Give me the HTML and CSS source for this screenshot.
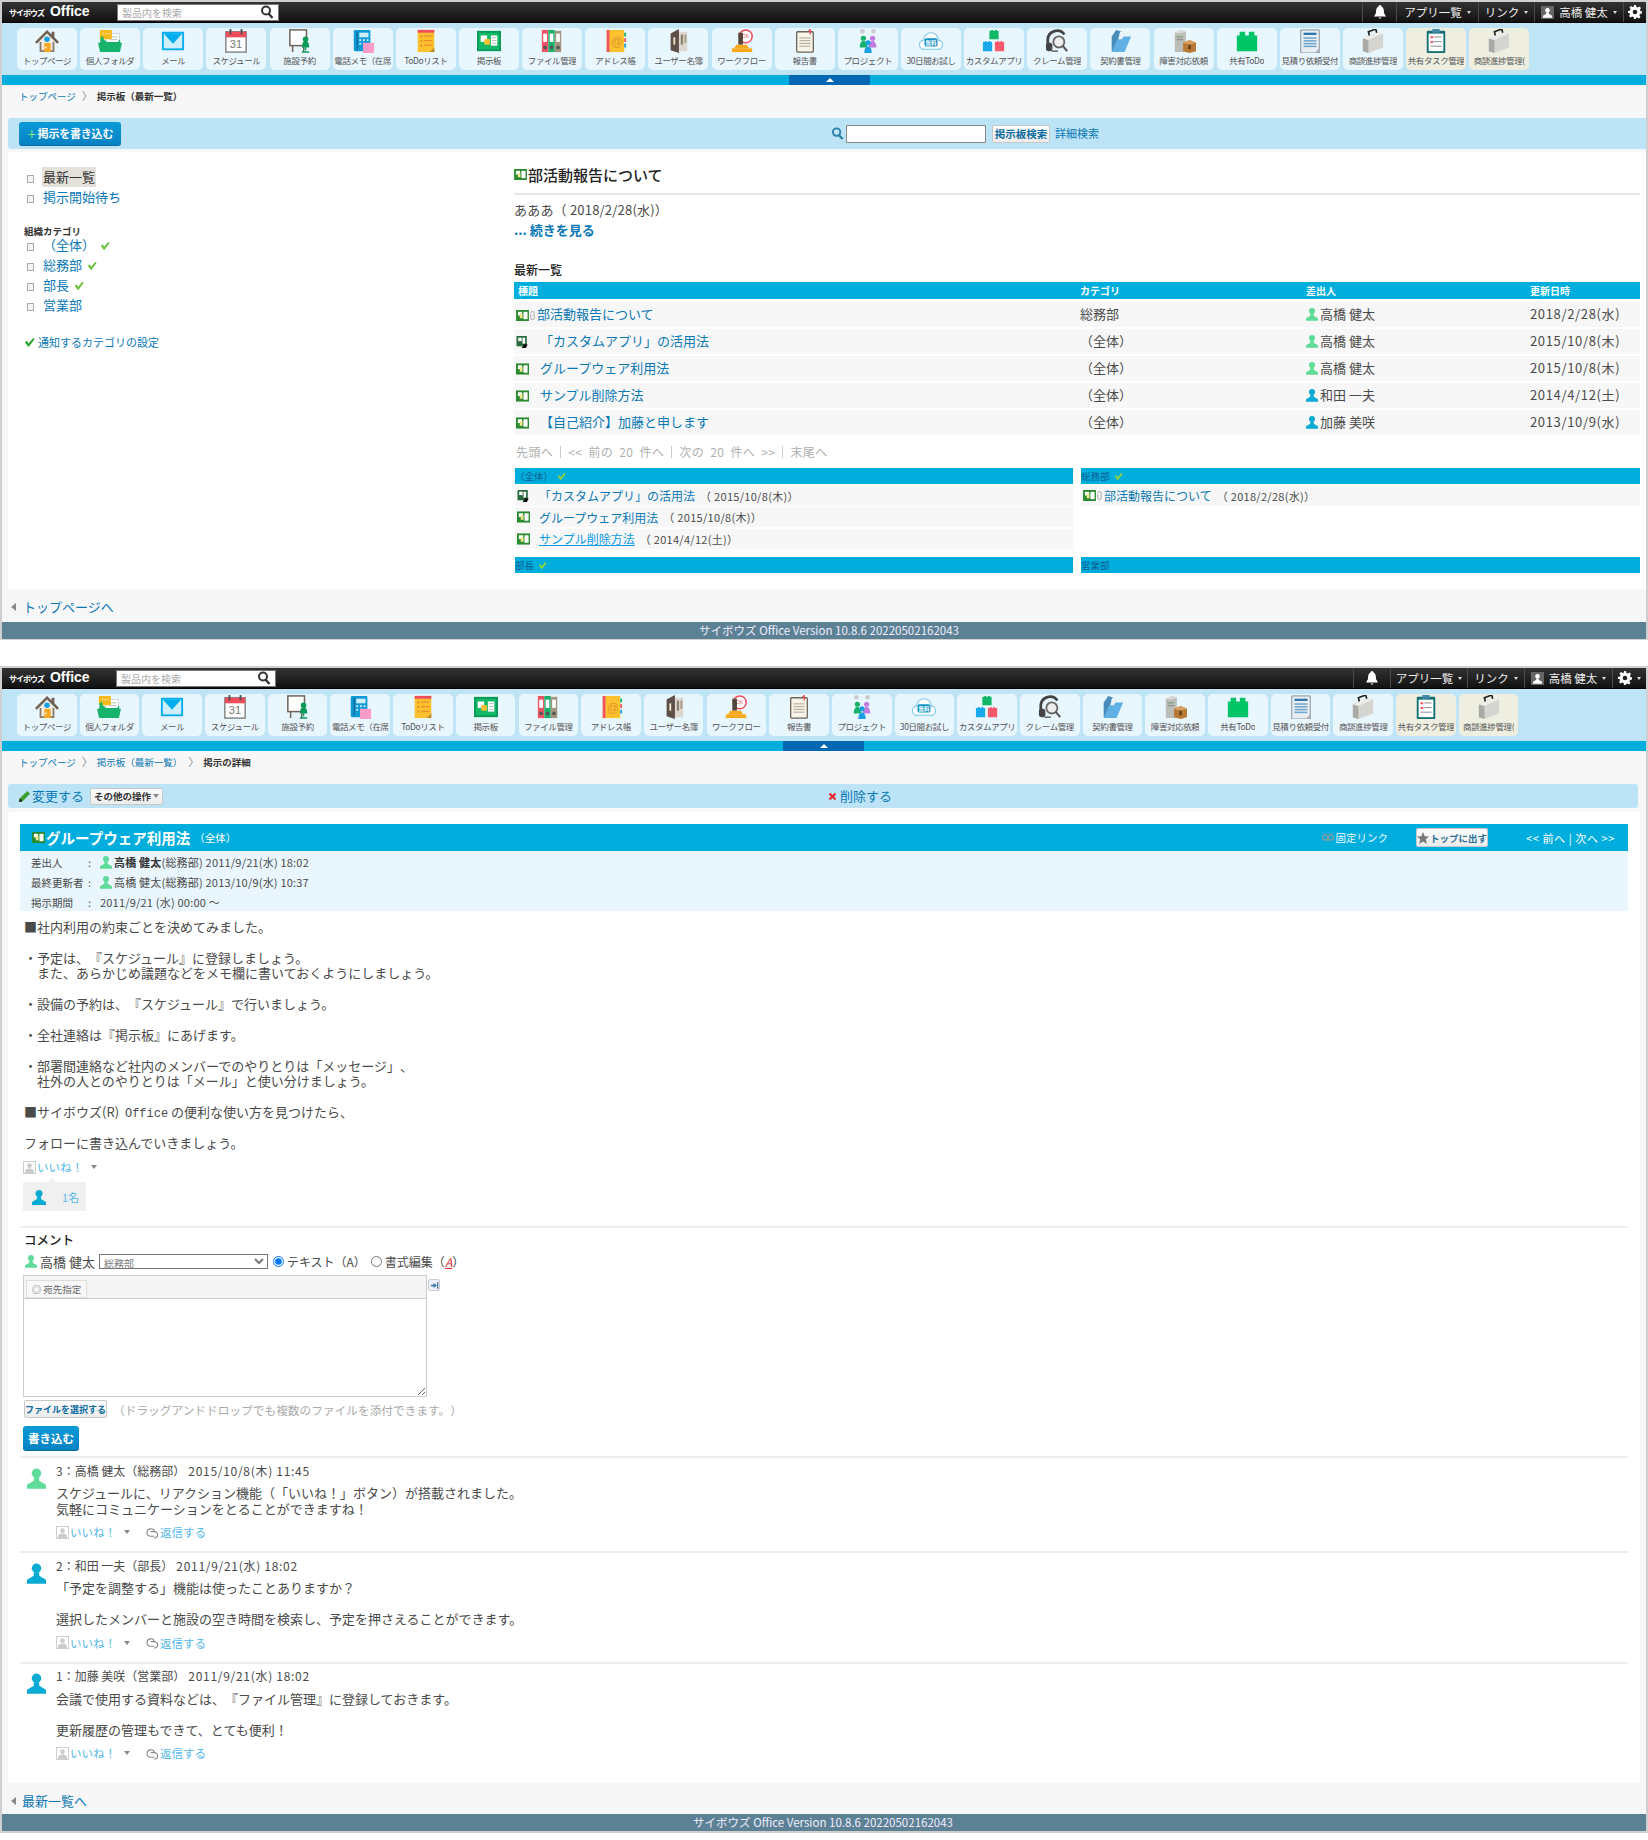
FILE: index.html
```html
<!DOCTYPE html>
<html lang="ja">
<head>
<meta charset="utf-8">
<title>サイボウズ Office 掲示板</title>
<link rel="stylesheet" href="styles.css">
</head>
<body>
<svg class="defs" width="0" height="0" aria-hidden="true">
<defs>
<symbol id="a-home" viewBox="0 0 26 26"><path d="M5 13 13 5l8 8v12H5z" fill="#f3efe6"/><path d="M13 1 0 14l2 2L13 5l11 11 2-2-5-5V3h-3v3z" fill="#6f6154"/><path d="M5 14v11h16V14h-2v9H7v-9z" fill="#8a7c6c"/><circle cx="13" cy="11" r="3" fill="#18a0e0"/><rect x="10" y="15" width="7" height="10" fill="#f7a823"/><rect x="11" y="19" width="1.5" height="2" fill="#fff"/></symbol>
<symbol id="a-folder" viewBox="0 0 26 26"><rect x="9" y="5" width="14" height="10" fill="#fff" stroke="#bbb" stroke-width=".6"/><rect x="13" y="8" width="8" height="1" fill="#9ccb9c"/><rect x="13" y="11" width="8" height="1" fill="#bbb"/><rect x="2" y="1" width="13" height="10" rx="1" fill="#f7b91c"/><circle cx="6" cy="5" r=".8" fill="#fff"/><circle cx="9" cy="5" r=".8" fill="#fff"/><circle cx="12" cy="5" r=".8" fill="#fff"/><path d="M3 8h3v3l4 3h12l1-2h1v6H2z" fill="#18b36b"/><path d="M0 15h26l-2 9a2 2 0 0 1-2 1H4a2 2 0 0 1-2-1z" fill="#18b36b"/></symbol>
<symbol id="a-mail" viewBox="0 0 26 26"><rect x="1" y="3" width="24" height="20" fill="#00aeef"/><rect x="3" y="5" width="20" height="16" fill="#cdeefb"/><path d="M3 5h20L13 16z" fill="#00aeef"/></symbol>
<symbol id="a-sched" viewBox="0 0 26 26"><rect x="2" y="3" width="22" height="22" fill="#fff" stroke="#777" stroke-width="1.4"/><rect x="2" y="3" width="22" height="6" fill="#ef4c5c"/><rect x="6" y="0" width="2" height="6" fill="#555"/><rect x="18" y="0" width="2" height="6" fill="#555"/><text x="13" y="21" font-family="Liberation Sans" font-size="12" text-anchor="middle" fill="#777">31</text></symbol>
<symbol id="a-fac" viewBox="0 0 26 26"><rect x="2" y="1" width="18" height="17" fill="#fff" stroke="#6c6257" stroke-width="1.6"/><path d="M5 18v7M17 18v7" stroke="#6c6257" stroke-width="1.6"/><circle cx="19" cy="11" r="3" fill="#0a9a58"/><path d="M15 20c0-5 2-7 4-7s4 2 4 7z" fill="#0a9a58"/><path d="M19 20v3M15 25h8" stroke="#0a9a58" stroke-width="1.6"/></symbol>
<symbol id="a-phone" viewBox="0 0 26 26"><rect x="3" y="1" width="18" height="23" rx="1.5" fill="#0e9ad6"/><rect x="6" y="3" width="1.6" height="19" fill="#0a6d9c"/><rect x="9" y="4" width="10" height="5" fill="#cdeefb"/><g fill="#cdeefb"><rect x="9" y="11" width="2" height="2"/><rect x="13" y="11" width="2" height="2"/><rect x="17" y="11" width="2" height="2"/><rect x="9" y="15" width="2" height="2"/><rect x="13" y="15" width="2" height="2"/></g><rect x="13" y="15" width="12" height="11" fill="#fb9cc8"/></symbol>
<symbol id="a-todo" viewBox="0 0 26 26"><rect x="4" y="1" width="18" height="24" fill="#fcc12e"/><rect x="4" y="1" width="18" height="3" fill="#ef4c5c"/><g fill="#e8892b"><rect x="7" y="7" width="2" height="2"/><rect x="11" y="7" width="9" height="1.2"/><rect x="7" y="12" width="2" height="2"/><rect x="11" y="12" width="9" height="1.2"/><rect x="7" y="17" width="2" height="2"/><rect x="11" y="17" width="9" height="1.2"/></g><path d="M17 25l5-5v5z" fill="#b98a2a"/></symbol>
<symbol id="a-board" viewBox="0 0 26 26"><rect x="0" y="2" width="26" height="22" fill="#0a9a58"/><rect x="2" y="4" width="22" height="18" fill="#10b868"/><rect x="4" y="7" width="7" height="7" fill="#fff"/><rect x="8" y="11" width="6" height="6" fill="#fcc12e"/><rect x="15" y="7" width="7" height="11" fill="#fff"/><g fill="#aaa"><rect x="16" y="9" width="5" height=".8"/><rect x="16" y="12" width="5" height=".8"/><rect x="16" y="15" width="5" height=".8"/></g></symbol>
<symbol id="a-file" viewBox="0 0 26 26"><rect x="2" y="1" width="7" height="24" fill="#ef5466"/><rect x="9" y="1" width="7" height="24" fill="#18b36b"/><rect x="16" y="2" width="7" height="23" fill="#a2957f"/><g fill="#fff"><rect x="3.5" y="5" width="4" height="9"/><rect x="10.5" y="5" width="4" height="9"/><rect x="17.5" y="5" width="4" height="9"/></g><circle cx="5.5" cy="20" r="2" fill="#555"/><circle cx="12.5" cy="20" r="2" fill="#555"/><circle cx="19.5" cy="20" r="2" fill="#555"/></symbol>
<symbol id="a-addr" viewBox="0 0 26 26"><rect x="4" y="1" width="19" height="24" fill="#fcc12e"/><rect x="4" y="1" width="3" height="24" fill="#ef5466"/><g fill="#18b36b"><rect x="23" y="4" width="2" height="4"/></g><rect x="23" y="10" width="2" height="4" fill="#ef5466"/><rect x="23" y="16" width="2" height="4" fill="#18a0e0"/><text x="15" y="18" font-family="Liberation Sans" font-size="13" text-anchor="middle" fill="#e2962c">@</text></symbol>
<symbol id="a-user" viewBox="0 0 26 26"><path d="M13 3h10v21H13z" fill="#dcd8cf"/><path d="M5 5l9-5v26l-9-3z" fill="#5e5048"/><rect x="8" y="9" width="2" height="8" fill="#efe7c9"/><rect x="16" y="6" width="2.500" height="11" fill="#8c8270"/><rect x="20" y="6" width="2" height="9" fill="#a69a86"/></symbol>
<symbol id="a-wf" viewBox="0 0 26 26"><circle cx="17" cy="8" r="7" fill="#fff" stroke="#ef4c5c" stroke-width="1.6"/><text x="17" y="10" font-family="Liberation Sans" font-size="5" text-anchor="middle" fill="#ef4c5c">OK</text><rect x="9" y="4" width="5" height="13" fill="#55463c"/><path d="M7 17h11l3 4H4z" fill="#f9a81b"/><rect x="2" y="21" width="22" height="4" fill="#f9a81b"/></symbol>
<symbol id="a-rep" viewBox="0 0 26 26"><rect x="4" y="3" width="18" height="22" rx="1" fill="#f7f4e9" stroke="#6c6257" stroke-width="1.4"/><g fill="#b7ae98"><rect x="7" y="9" width="12" height="1.2"/><rect x="7" y="12" width="12" height="1.2"/><rect x="7" y="15" width="12" height="1.2"/><rect x="7" y="18" width="12" height="1.2"/></g><path d="M18 0h1.4v6H18z" fill="#ef4c5c"/><path d="M16 2l3-2v3z" fill="#ef4c5c"/></symbol>
<symbol id="a-proj" viewBox="0 0 26 26"><circle cx="7" cy="2.5" r="2.5" fill="#ccc"/><circle cx="19" cy="2.5" r="2.5" fill="#ccc"/><circle cx="8" cy="10" r="2.8" fill="#18b36b"/><path d="M4 20c0-5 2-7 4-7s4 2 4 7z" fill="#18b36b"/><circle cx="18" cy="10" r="2.8" fill="#c27be0"/><path d="M14 20c0-5 2-7 4-7s4 2 4 7z" fill="#c27be0"/><circle cx="13" cy="15" r="2.8" fill="#18a0e0"/><path d="M9 26c0-5 2-7 4-7s4 2 4 7z" fill="#18a0e0"/></symbol>
<symbol id="a-trial" viewBox="0 0 26 26"><path d="M6 22a5 5 0 0 1-1-10 8 8 0 0 1 16 0 5 5 0 0 1-1 10z" fill="#fff" stroke="#7fc8e8" stroke-width="1.2"/><rect x="6" y="10" width="14" height="9" rx="2" fill="#0e8fc4"/><text x="13" y="17" font-family="Noto Sans CJK JP" font-weight="700" font-size="6" text-anchor="middle" fill="#fff">無料</text></symbol>
<symbol id="a-custom" viewBox="0 0 26 26"><path d="M8 2h2v-1h2v1h2v-1h2v1h2v9H8z" fill="#10b868"/><path d="M1 14h2v-1h2v1h2v-1h2v1h2v10H1z" fill="#18a8ec"/><path d="M14 14h2v-1h2v1h2v-1h2v1h2v10H14z" fill="#f9596b"/></symbol>
<symbol id="a-claim" viewBox="0 0 26 26"><path d="M3 18V11a10 10 0 0 1 18-5" fill="none" stroke="#444" stroke-width="3"/><rect x="1" y="15" width="7" height="9" rx="3" fill="#444"/><circle cx="15" cy="14" r="6" fill="#eee" stroke="#666" stroke-width="2"/><path d="M19 18l5 6" stroke="#555" stroke-width="2.4"/><path d="M7 24h7" stroke="#444" stroke-width="1.4"/></symbol>
<symbol id="a-contract" viewBox="0 0 26 26"><path d="M4 24V8l5-7 6 2v19z" fill="#4a8cba"/><path d="M9 20l4-17 7 1-4 16z" fill="#e8f2f8"/><path d="M4 25l6-14h5l2-3h8l-7 17z" fill="#5fb0e4"/></symbol>
<symbol id="a-inc" viewBox="0 0 26 26"><path d="M3 4l7-3 5 2v22H3z" fill="#bdbdb8"/><path d="M3 4l7-3 5 2-7 2z" fill="#dcdcd8"/><rect x="5" y="8" width="7" height="1.2" fill="#7aa07a"/><rect x="5" y="11" width="7" height="1.2" fill="#888"/><path d="M12 15l7-3 7 3v9l-7 2-7-2z" fill="#b87a34"/><path d="M12 15l7 2 7-2-7-3z" fill="#d8a060"/><rect x="17.5" y="17" width="3" height="5" fill="#6b4218"/></symbol>
<symbol id="a-block" viewBox="0 0 26 26"><path d="M2 7h3V3h6v4h4V3h6v4h3v17H2z" fill="#00c468"/></symbol>
<symbol id="a-est" viewBox="0 0 26 26"><path d="M3 1h20v25H3z" fill="#e8eef2" stroke="#7f8c96" stroke-width="1"/><rect x="6" y="4" width="14" height="2.5" fill="#2f78ad"/><g fill="#6aa3cc"><rect x="6" y="9" width="14" height="1.6"/><rect x="6" y="12" width="14" height="1.6"/><rect x="6" y="15" width="14" height="1.6"/><rect x="6" y="18" width="14" height="1.6"/></g><path d="M18 26l5-5v5z" fill="#aab"/></symbol>
<symbol id="a-case" viewBox="0 0 26 26"><path d="M2 10l16-7 6 2v15L8 26l-6-2z" fill="#d4d4d0"/><path d="M2 10l6 2v14l-6-2z" fill="#a9a9a5"/><path d="M2 10l16-7 6 2-16 7z" fill="#ecece8"/><path d="M9 7l-1-4 8-3 1 4" fill="none" stroke="#222" stroke-width="1.8"/></symbol>
<symbol id="a-clip" viewBox="0 0 26 26"><rect x="3" y="2" width="20" height="24" rx="1" fill="#136f72"/><rect x="5" y="5" width="16" height="19" fill="#fff"/><rect x="9" y="0" width="8" height="4" fill="#4488aa"/><g fill="#ef4c5c"><rect x="7" y="8" width="3" height="2"/><rect x="7" y="13" width="3" height="2"/></g><g fill="#999"><rect x="11" y="8" width="8" height="1.2"/><rect x="11" y="13" width="8" height="1.2"/><rect x="7" y="18" width="12" height="1.2"/></g></symbol>

<symbol id="s-board" viewBox="0 0 14 12"><rect width="14" height="12" fill="#2a8a2f"/><rect x="2" y="2" width="4.5" height="4" fill="#fff"/><rect x="4" y="4" width="3" height="5" fill="#f3e78f"/><rect x="8" y="2" width="4.5" height="8" fill="#fff"/></symbol>
<symbol id="s-draft" viewBox="0 0 14 14"><rect width="12" height="12" fill="#2a6a3f"/><rect x="2" y="2" width="4" height="4" fill="#fff"/><rect x="7" y="2" width="3" height="7" fill="#fff"/><path d="M6 14l3-5 4 1-2 4z" fill="#111"/></symbol>
<symbol id="s-user" viewBox="0 0 14 16"><circle cx="7" cy="4.5" r="3.5" fill="currentColor"/><path d="M5 7.5h4V10l5 3v3H0v-3l5-3z" fill="currentColor"/></symbol>
<symbol id="s-check" viewBox="0 0 12 12"><path d="M1 6l2-2 2 3 5-6 1.5 1.5L5 11z" fill="currentColor"/></symbol>
<symbol id="s-mag" viewBox="0 0 14 14"><circle cx="6" cy="5.5" r="4" fill="none" stroke="currentColor" stroke-width="2"/><path d="M8.5 8.5l4 4.5" stroke="currentColor" stroke-width="2.4"/></symbol>
<symbol id="s-paper" viewBox="0 0 6 12"><path d="M1 3a2 2 0 0 1 4 0v6a2 2 0 0 1-4 0V4" fill="none" stroke="#999" stroke-width="1"/></symbol>
<symbol id="s-like" viewBox="0 0 14 14"><rect x=".5" y=".5" width="13" height="13" fill="#fff" stroke="#ccc"/><circle cx="7" cy="5" r="2.5" fill="#ccc"/><path d="M2 13c0-4 2-5 5-5s5 1 5 5z" fill="#ccc"/></symbol>
<symbol id="s-reply" viewBox="0 0 14 14"><path d="M9 11H5a4 4 0 1 1 4-5" fill="none" stroke="#888" stroke-width="1.2"/><path d="M5 6h4a3.500 3.500 0 0 1 0 7" fill="none" stroke="#888" stroke-width="1.2"/></symbol>
<symbol id="s-bell" viewBox="0 0 12 14"><path d="M6 0c1 0 1.500 1 1.500 1.500C10 2.500 10 6 10 8l2 3.500H0L2 8c0-2 0-5.500 2.500-6.500C4.500 1 5 0 6 0z" fill="#fff"/><path d="M4.500 12.500h3l-1.500 1.500z" fill="#fff"/></symbol>
<symbol id="s-gear" viewBox="0 0 14 14"><path d="M6 0h2l.4 2 1.400.6L11.500 1.500 13 3l-1.100 1.700.6 1.400L14 6.500v2l-2 .4-.6 1.400 1.100 1.700-1.500 1.500-1.700-1.100-1.400.6L8 14H6l-.4-2-1.400-.6L2.500 12.500 1 11l1.100-1.700-.6-1.400L0 8V6l2-.4.6-1.400L1.500 2.500 3 1l1.700 1.100L6 1.600z" fill="#fff"/><circle cx="7" cy="7" r="2.300" fill="#222"/></symbol>
<symbol id="s-star" viewBox="0 0 14 14"><path d="M7 0l2 5 5 .3-3.800 3.300L11.500 14 7 11l-4.500 3 1.300-5.400L0 5.300 5 5z" fill="#777"/></symbol>
<symbol id="s-pencil" viewBox="0 0 14 14"><path d="M1 13l1-4L10 1l3 3-8 8z" fill="#3c9e2e"/><path d="M1 13l1-4 3 3z" fill="#222"/></symbol>
<symbol id="s-cross" viewBox="0 0 12 12"><path d="M1 3l2-2 3 3 3-3 2 2-3 3 3 3-2 2-3-3-3 3-2-2 3-3z" fill="#e6282c"/></symbol>
<symbol id="s-link" viewBox="0 0 14 8"><rect x=".5" y="1" width="7" height="6" rx="3" fill="none" stroke="#999" stroke-width="1.4"/><rect x="6.500" y="1" width="7" height="6" rx="3" fill="none" stroke="#999" stroke-width="1.4"/></symbol>
<symbol id="s-expand" viewBox="0 0 10 10"><path d="M1 5h5M4 3l2.500 2L4 7" fill="none" stroke="#3a78a8" stroke-width="1.400"/><path d="M8.500 1.500v7" stroke="#3a78a8" stroke-width="1.400"/></symbol>
</defs>
</svg>

<!-- First window: bulletin board list -->
<section class="win win-a">
  <header class="topbar">
    <div class="logo"><span class="logo-small">サイボウズ</span> <span class="logo-big">Office</span></div>
    <div class="search"><span class="search-ph">製品内を検索</span><svg class="ic-mag"><use href="#s-mag"/></svg></div>
    <div class="top-right">
      <div class="t-cell t-bell"><svg class="ic-bell"><use href="#s-bell"/></svg></div>
      <div class="t-cell t-apps">アプリ一覧<i class="caret"></i></div>
      <div class="t-cell t-links">リンク<i class="caret"></i></div>
      <div class="t-cell t-me"><span class="me-box"><svg class="ic-me"><use href="#s-user"/></svg></span>高橋 健太<i class="caret"></i></div>
      <div class="t-cell t-gear"><svg class="ic-gear"><use href="#s-gear"/></svg></div>
    </div>
  </header>
  <nav class="apps">
    <a class="tile"><svg><use href="#a-home"/></svg><span>トップページ</span></a>
    <a class="tile"><svg><use href="#a-folder"/></svg><span>個人フォルダ</span></a>
    <a class="tile"><svg><use href="#a-mail"/></svg><span>メール</span></a>
    <a class="tile"><svg><use href="#a-sched"/></svg><span>スケジュール</span></a>
    <a class="tile"><svg><use href="#a-fac"/></svg><span>施設予約</span></a>
    <a class="tile"><svg><use href="#a-phone"/></svg><span>電話メモ（在席</span></a>
    <a class="tile"><svg><use href="#a-todo"/></svg><span>ToDoリスト</span></a>
    <a class="tile"><svg><use href="#a-board"/></svg><span>掲示板</span></a>
    <a class="tile"><svg><use href="#a-file"/></svg><span>ファイル管理</span></a>
    <a class="tile"><svg><use href="#a-addr"/></svg><span>アドレス帳</span></a>
    <a class="tile"><svg><use href="#a-user"/></svg><span>ユーザー名簿</span></a>
    <a class="tile"><svg><use href="#a-wf"/></svg><span>ワークフロー</span></a>
    <a class="tile"><svg><use href="#a-rep"/></svg><span>報告書</span></a>
    <a class="tile"><svg><use href="#a-proj"/></svg><span>プロジェクト</span></a>
    <a class="tile"><svg><use href="#a-trial"/></svg><span>30日間お試し</span></a>
    <a class="tile"><svg><use href="#a-custom"/></svg><span>カスタムアプリ</span></a>
    <a class="tile"><svg><use href="#a-claim"/></svg><span>クレーム管理</span></a>
    <a class="tile"><svg><use href="#a-contract"/></svg><span>契約書管理</span></a>
    <a class="tile"><svg><use href="#a-inc"/></svg><span>障害対応依頼</span></a>
    <a class="tile"><svg><use href="#a-block"/></svg><span>共有ToDo</span></a>
    <a class="tile"><svg><use href="#a-est"/></svg><span>見積り依頼受付</span></a>
    <a class="tile"><svg><use href="#a-case"/></svg><span>商談進捗管理</span></a>
    <a class="tile tile-beige"><svg><use href="#a-clip"/></svg><span>共有タスク管理</span></a>
    <a class="tile tile-beige"><svg><use href="#a-case"/></svg><span>商談進捗管理(</span></a>
  </nav>
  <div class="collapse"><div class="collapse-tab"><i class="up"></i></div></div>
  <div class="crumbs"><a class="link">トップページ</a><span class="sep">〉</span><b>掲示板（最新一覧）</b></div>
  <div class="toolbar toolbar-a">
    <button class="btn-primary btn-post"><span class="plus">＋</span>掲示を書き込む</button>
    <div class="tb-search">
      <svg class="ic-tbmag"><use href="#s-mag"/></svg>
      <input class="tb-input" type="text" aria-label="検索">
      <button class="btn-light btn-find">掲示板検索</button>
      <a class="link tb-adv">詳細検索</a>
    </div>
  </div>
  <main class="sheet sheet-list">
    <aside class="side">
      <ul class="side-list">
        <li><i class="dot"></i><span class="current">最新一覧</span></li>
        <li><i class="dot"></i><a class="link">掲示開始待ち</a></li>
      </ul>
      <h4 class="side-head">組織カテゴリ</h4>
      <ul class="side-list">
        <li><i class="dot"></i><a class="link">（全体）</a><svg class="ic-check"><use href="#s-check"/></svg></li>
        <li><i class="dot"></i><a class="link">総務部</a><svg class="ic-check"><use href="#s-check"/></svg></li>
        <li><i class="dot"></i><a class="link">部長</a><svg class="ic-check"><use href="#s-check"/></svg></li>
        <li><i class="dot"></i><a class="link">営業部</a></li>
      </ul>
      <div class="side-notify"><svg class="ic-check2"><use href="#s-check"/></svg><a class="link">通知するカテゴリの設定</a></div>
    </aside>
    <div class="main-col">
      <h2 class="top-title"><svg class="ic-board"><use href="#s-board"/></svg>部活動報告について</h2>
      <p class="excerpt">あああ（ 2018/2/28(水)）</p>
      <a class="link more">... 続きを見る</a>
      <h3 class="list-head">最新一覧</h3>
      <table class="list">
        <thead><tr><th class="c1">標題</th><th class="c2">カテゴリ</th><th class="c3">差出人</th><th class="c4">更新日時</th></tr></thead>
        <tbody>
          <tr><td><svg class="ic-board"><use href="#s-board"/></svg><svg class="ic-paper"><use href="#s-paper"/></svg><a class="link">部活動報告について</a></td><td>総務部</td><td><svg class="ic-u u-green"><use href="#s-user"/></svg>高橋 健太</td><td class="date">2018/2/28(水)</td></tr>
          <tr><td><svg class="ic-board ic-row"><use href="#s-draft"/></svg><a class="link">「カスタムアプリ」の活用法</a></td><td>（全体）</td><td><svg class="ic-u u-green"><use href="#s-user"/></svg>高橋 健太</td><td class="date">2015/10/8(木)</td></tr>
          <tr><td><svg class="ic-board ic-row"><use href="#s-board"/></svg><a class="link">グループウェア利用法</a></td><td>（全体）</td><td><svg class="ic-u u-green"><use href="#s-user"/></svg>高橋 健太</td><td class="date">2015/10/8(木)</td></tr>
          <tr><td><svg class="ic-board ic-row"><use href="#s-board"/></svg><a class="link">サンプル削除方法</a></td><td>（全体）</td><td><svg class="ic-u u-blue"><use href="#s-user"/></svg>和田 一夫</td><td class="date">2014/4/12(土)</td></tr>
          <tr><td><svg class="ic-board ic-row"><use href="#s-board"/></svg><a class="link">【自己紹介】加藤と申します</a></td><td>（全体）</td><td><svg class="ic-u u-blue"><use href="#s-user"/></svg>加藤 美咲</td><td class="date">2013/10/9(水)</td></tr>
        </tbody>
      </table>
      <p class="pager">先頭へ<i></i>&lt;&lt; 前の 20 件へ<i></i>次の 20 件へ &gt;&gt;<i></i>末尾へ</p>
      <div class="panels">
        <section class="panel">
          <h5 class="panel-head">（全体）<svg class="ic-pcheck"><use href="#s-check"/></svg></h5>
          <div class="panel-row"><svg class="ic-board ic-row"><use href="#s-draft"/></svg><a class="link">「カスタムアプリ」の活用法</a><span class="p-date">（ 2015/10/8(木)）</span></div>
          <div class="panel-row"><svg class="ic-board ic-row"><use href="#s-board"/></svg><a class="link">グループウェア利用法</a><span class="p-date">（ 2015/10/8(木)）</span></div>
          <div class="panel-row"><svg class="ic-board ic-row"><use href="#s-board"/></svg><a class="link hover">サンプル削除方法</a><span class="p-date">（ 2014/4/12(土)）</span></div>
        </section>
        <section class="panel">
          <h5 class="panel-head">総務部<svg class="ic-pcheck"><use href="#s-check"/></svg></h5>
          <div class="panel-row"><svg class="ic-board"><use href="#s-board"/></svg><svg class="ic-paper"><use href="#s-paper"/></svg><a class="link">部活動報告について</a><span class="p-date">（ 2018/2/28(水)）</span></div>
        </section>
        <section class="panel"><h5 class="panel-head">部長<svg class="ic-pcheck"><use href="#s-check"/></svg></h5></section>
        <section class="panel"><h5 class="panel-head">営業部</h5></section>
      </div>
    </div>
  </main>
  <div class="back"><i class="left"></i><a class="link">トップページへ</a></div>
  <footer class="foot foot-a">サイボウズ Office Version 10.8.6 20220502162043</footer>
</section>

<!-- Second window: post detail -->
<section class="win win-b">
  <header class="topbar">
    <div class="logo"><span class="logo-small">サイボウズ</span> <span class="logo-big">Office</span></div>
    <div class="search"><span class="search-ph">製品内を検索</span><svg class="ic-mag"><use href="#s-mag"/></svg></div>
    <div class="top-right">
      <div class="t-cell t-bell"><svg class="ic-bell"><use href="#s-bell"/></svg></div>
      <div class="t-cell t-apps">アプリ一覧<i class="caret"></i></div>
      <div class="t-cell t-links">リンク<i class="caret"></i></div>
      <div class="t-cell t-me"><span class="me-box"><svg class="ic-me"><use href="#s-user"/></svg></span>高橋 健太<i class="caret"></i></div>
      <div class="t-cell t-gear"><svg class="ic-gear"><use href="#s-gear"/></svg><i class="caret"></i></div>
    </div>
  </header>
  <nav class="apps">
    <a class="tile"><svg><use href="#a-home"/></svg><span>トップページ</span></a>
    <a class="tile"><svg><use href="#a-folder"/></svg><span>個人フォルダ</span></a>
    <a class="tile"><svg><use href="#a-mail"/></svg><span>メール</span></a>
    <a class="tile"><svg><use href="#a-sched"/></svg><span>スケジュール</span></a>
    <a class="tile"><svg><use href="#a-fac"/></svg><span>施設予約</span></a>
    <a class="tile"><svg><use href="#a-phone"/></svg><span>電話メモ（在席</span></a>
    <a class="tile"><svg><use href="#a-todo"/></svg><span>ToDoリスト</span></a>
    <a class="tile"><svg><use href="#a-board"/></svg><span>掲示板</span></a>
    <a class="tile"><svg><use href="#a-file"/></svg><span>ファイル管理</span></a>
    <a class="tile"><svg><use href="#a-addr"/></svg><span>アドレス帳</span></a>
    <a class="tile"><svg><use href="#a-user"/></svg><span>ユーザー名簿</span></a>
    <a class="tile"><svg><use href="#a-wf"/></svg><span>ワークフロー</span></a>
    <a class="tile"><svg><use href="#a-rep"/></svg><span>報告書</span></a>
    <a class="tile"><svg><use href="#a-proj"/></svg><span>プロジェクト</span></a>
    <a class="tile"><svg><use href="#a-trial"/></svg><span>30日間お試し</span></a>
    <a class="tile"><svg><use href="#a-custom"/></svg><span>カスタムアプリ</span></a>
    <a class="tile"><svg><use href="#a-claim"/></svg><span>クレーム管理</span></a>
    <a class="tile"><svg><use href="#a-contract"/></svg><span>契約書管理</span></a>
    <a class="tile"><svg><use href="#a-inc"/></svg><span>障害対応依頼</span></a>
    <a class="tile"><svg><use href="#a-block"/></svg><span>共有ToDo</span></a>
    <a class="tile"><svg><use href="#a-est"/></svg><span>見積り依頼受付</span></a>
    <a class="tile"><svg><use href="#a-case"/></svg><span>商談進捗管理</span></a>
    <a class="tile tile-beige"><svg><use href="#a-clip"/></svg><span>共有タスク管理</span></a>
    <a class="tile tile-beige"><svg><use href="#a-case"/></svg><span>商談進捗管理(</span></a>
  </nav>
  <div class="collapse"><div class="collapse-tab"><i class="up"></i></div></div>
  <div class="crumbs"><a class="link">トップページ</a><span class="sep">〉</span><a class="link">掲示板（最新一覧）</a><span class="sep">〉</span><b>掲示の詳細</b></div>
  <div class="toolbar toolbar-b">
    <svg class="ic-pencil"><use href="#s-pencil"/></svg><a class="link tb-edit">変更する</a>
    <button class="btn-light btn-more">その他の操作<i class="caret-dn"></i></button>
    <svg class="ic-cross"><use href="#s-cross"/></svg><a class="link tb-del">削除する</a>
  </div>
  <main class="sheet sheet-detail">
    <div class="title-bar">
      <svg class="ic-board ic-title"><use href="#s-board"/></svg>
      <h1 class="post-title">グループウェア利用法</h1><span class="post-cat">（全体）</span>
      <div class="title-tools">
        <svg class="ic-link"><use href="#s-link"/></svg><a class="fixed-link">固定リンク</a>
        <button class="btn-light btn-top"><svg class="ic-star"><use href="#s-star"/></svg>トップに出す</button>
        <span class="prevnext">&lt;&lt; 前へ | 次へ &gt;&gt;</span>
      </div>
    </div>
    <dl class="info">
      <div class="info-row"><dt>差出人</dt><dd>:</dd><dd class="info-val"><svg class="ic-u u-green"><use href="#s-user"/></svg><b>高橋 健太</b>(総務部) 2011/9/21(水) 18:02</dd></div>
      <div class="info-row"><dt>最終更新者</dt><dd>:</dd><dd class="info-val"><svg class="ic-u u-green"><use href="#s-user"/></svg>高橋 健太(総務部) 2013/10/9(水) 10:37</dd></div>
      <div class="info-row"><dt>掲示期間</dt><dd>:</dd><dd class="info-val">2011/9/21 (水) 00:00 ～</dd></div>
    </dl>
    <div class="post-body">■社内利用の約束ごとを決めてみました。

・予定は、『スケジュール』に登録しましょう。
　また、あらかじめ議題などをメモ欄に書いておくようにしましょう。

・設備の予約は、『スケジュール』で行いましょう。

・全社連絡は『掲示板』にあげます。

・部署間連絡など社内のメンバーでのやりとりは「メッセージ」、
　社外の人とのやりとりは「メール」と使い分けましょう。

■サイボウズ(R) <span class="mono">Office</span> の便利な使い方を見つけたら、

フォローに書き込んでいきましょう。</div>
    <div class="like-row like-main"><svg class="ic-like"><use href="#s-like"/></svg><a class="like-link">いいね！</a><i class="caret-dn caret-like"></i></div>
    <div class="like-box"><svg class="ic-lk u-blue"><use href="#s-user"/></svg><span>1名</span></div>
    <form class="compose">
      <h3 class="compose-head">コメント</h3>
      <div class="compose-row">
        <svg class="ic-u u-green"><use href="#s-user"/></svg><span class="compose-name">高橋 健太</span>
        <select class="dept" aria-label="部署"><option>総務部</option></select>
        <label class="rad rad-first"><input type="radio" name="fmt" checked>テキスト（A）</label>
        <label class="rad"><input type="radio" name="fmt">書式編集（<em>A</em>）</label>
      </div>
      <div class="editor-wrap">
        <div class="editor">
          <div class="ed-tools"><button type="button" class="ed-btn">◎ 宛先指定</button></div>
          <textarea class="ed-text" aria-label="コメント"></textarea>
        </div>
        <span class="ed-expand"><svg class="ic-expand"><use href="#s-expand"/></svg></span>
      </div>
      <div class="file-row"><button type="button" class="btn-light btn-file">ファイルを選択する</button><span class="file-hint">（ドラッグアンドドロップでも複数のファイルを添付できます。）</span></div>
      <button type="button" class="btn-primary btn-write">書き込む</button>
    </form>
    <article class="comment">
      <svg class="avatar u-green"><use href="#s-user"/></svg>
      <div class="c-main">
        <div class="c-head">3：高橋 健太（総務部）<span class="c-date">2015/10/8(木) 11:45</span></div>
        <div class="c-body">スケジュールに、リアクション機能（「いいね！」ボタン）が搭載されました。
気軽にコミュニケーションをとることができますね！</div>
        <div class="like-row"><svg class="ic-like"><use href="#s-like"/></svg><a class="like-link">いいね！</a><i class="caret-dn caret-like"></i><svg class="ic-reply"><use href="#s-reply"/></svg><a class="like-link">返信する</a></div>
      </div>
    </article>
    <article class="comment">
      <svg class="avatar u-blue"><use href="#s-user"/></svg>
      <div class="c-main">
        <div class="c-head">2：和田 一夫（部長）<span class="c-date">2011/9/21(水) 18:02</span></div>
        <div class="c-body">「予定を調整する」機能は使ったことありますか？

選択したメンバーと施設の空き時間を検索し、予定を押さえることができます。</div>
        <div class="like-row"><svg class="ic-like"><use href="#s-like"/></svg><a class="like-link">いいね！</a><i class="caret-dn caret-like"></i><svg class="ic-reply"><use href="#s-reply"/></svg><a class="like-link">返信する</a></div>
      </div>
    </article>
    <article class="comment comment-last">
      <svg class="avatar u-blue"><use href="#s-user"/></svg>
      <div class="c-main">
        <div class="c-head">1：加藤 美咲（営業部）<span class="c-date">2011/9/21(水) 18:02</span></div>
        <div class="c-body">会議で使用する資料などは、『ファイル管理』に登録しておきます。

更新履歴の管理もできて、とても便利！</div>
        <div class="like-row"><svg class="ic-like"><use href="#s-like"/></svg><a class="like-link">いいね！</a><i class="caret-dn caret-like"></i><svg class="ic-reply"><use href="#s-reply"/></svg><a class="like-link">返信する</a></div>
      </div>
    </article>
  </main>
  <div class="back"><i class="left"></i><a class="link">最新一覧へ</a></div>
  <footer class="foot foot-b">サイボウズ Office Version 10.8.6 20220502162043</footer>
</section>
</body>
</html>
```

FILE: styles.css
```css
* { box-sizing: border-box; }
html, body { margin: 0; padding: 0; background: #fff; }
body { font-family: "Noto Sans CJK JP", "Liberation Sans", sans-serif; font-size: 13px; color: #4a4a4a; width: 1648px; height: 1840px; overflow: hidden; text-spacing-trim: space-all; }
h1, h2, h3, h4, h5, p, ul, dl, dd { margin: 0; padding: 0; }
ul { list-style: none; }
i { font-style: normal; }
svg { flex: none; }
.defs { position: absolute; }
.link { color: #0a78b4; }

/* window frames */
.win { background: #f7f7f7; border: solid #cfcfcf; border-width: 2px 2px 1px 2px; }
.win-a { height: 640px; margin-bottom: 26px; }
.win-b { height: 1167px; border-bottom-width: 2px; }

/* top bar */
.topbar { height: 21px; display: flex; align-items: center; background: linear-gradient(#333, #111); border-bottom: 1px solid #000; color: #fff; }
.logo { width: 115px; padding-left: 7px; white-space: nowrap; line-height: 20px; font-weight: 700; }
.win-b .logo { width: 114px; }
.logo-small { font-size: 8px; letter-spacing: -1px; margin-right: 3px; }
.logo-big { font-size: 14px; font-family: "Liberation Sans", sans-serif; }
.search { width: 162px; height: 17px; background: #fff; display: flex; align-items: center; justify-content: space-between; padding: 0 4px; border: 1px solid #777; }
.win-b .search { width: 160px; }
.search-ph { font-size: 10px; color: #aaa; }
.ic-mag { width: 14px; height: 14px; color: #333; }
.top-right { margin-left: auto; display: flex; height: 100%; }
.t-cell { display: flex; align-items: center; justify-content: center; height: 100%; border-left: 1px solid #4a4a4a; font-size: 11.5px; color: #eee; white-space: nowrap; }
.win-a .t-bell { width: 34px; } .win-a .t-apps { width: 82px; } .win-a .t-links { width: 56px; } .win-a .t-me { width: 89px; } .win-a .t-gear { width: 23px; }
.win-b .t-bell { width: 37px; } .win-b .t-apps { width: 77px; } .win-b .t-links { width: 57px; } .win-b .t-me { width: 88px; } .win-b .t-gear { width: 34px; }
.caret { display: inline-block; margin-left: 5px; border: 2.5px solid transparent; border-top: 3px solid #ddd; border-bottom: 0; }
.ic-bell { width: 12px; height: 14px; }
.ic-gear { width: 14px; height: 14px; }
.me-box { width: 13px; height: 13px; background: #666; display: inline-flex; align-items: center; justify-content: center; margin-right: 5px; }
.ic-me { width: 9px; height: 11px; color: #fff; }

/* app launcher */
.apps { height: 52px; background: #bee4f5; display: flex; padding: 5px 0 0 15px; gap: 3.15px; }
.win-b .apps { gap: 3.1px; }
.tile { width: 60px; height: 42px; background: #e8f6fd; border-radius: 5px; padding-top: 1px; display: flex; flex-direction: column; align-items: center; overflow: hidden; }
.win-b .tile { width: 59.6px; }
.tile-beige { background: #efefe1; }
.tile svg { width: 26px; height: 24px; }
.tile span { display: block; max-width: 100%; line-height: 14px; font-size: 8.5px; letter-spacing: -.4px; color: #555; white-space: nowrap; overflow: hidden; }
.collapse { height: 10px; background: #00aede; }
.collapse-tab { width: 81px; height: 100%; margin-left: 787px; background: #0068b0; display: flex; align-items: center; justify-content: center; }
.win-b .collapse-tab { margin-left: 781px; }
.up { border: 4px solid transparent; border-bottom: 4px solid #fff; border-top: 0; }

/* breadcrumbs */
.crumbs { height: 33px; padding: 2px 0 0 17px; line-height: 16px; font-size: 9.5px; }
.crumbs b { color: #333; }
.sep { color: #888; font-size: 11px; margin: 0 4px 0 6px; }

/* toolbars */
.toolbar { margin-left: 6px; background: #bde4f6; display: flex; align-items: center; }
.toolbar-a { height: 31px; padding-left: 11px; border-radius: 3px 0 0 3px; }
.toolbar-b { height: 24px; width: 1630px; padding-left: 10px; border-radius: 3px; }
.btn-primary { border: 0; border-bottom: 1px solid #0b6ca0; border-radius: 3px; background: linear-gradient(#0a9ad8, #0682c4); color: #fff; font: 700 11px "Noto Sans CJK JP", sans-serif; padding: 0; }
.btn-post { width: 102px; height: 24px; white-space: nowrap; letter-spacing: -.2px; }
.plus { color: #7fe07f; margin-right: 1px; font-size: 10px; }
.btn-light { border: 1px solid #c8c8c8; border-radius: 2px; background: linear-gradient(#fdfdfd, #ececec); color: #0a6aa0; font: 700 10px "Noto Sans CJK JP", sans-serif; padding: 0; white-space: nowrap; }
.tb-search { display: flex; align-items: center; margin-left: 710px; }
.ic-tbmag { width: 13px; height: 13px; color: #2a7fa8; margin-right: 2px; }
.tb-input { width: 140px; height: 18px; border: 1px solid #8a8a8a; background: #fff; padding: 0; }
.btn-find { width: 58px; height: 18px; margin-left: 6px; font-size: 10.5px; }
.tb-adv { font-size: 11px; margin-left: 5px; padding-bottom: 2px; }
.ic-pencil { width: 13px; height: 13px; }
.tb-edit { margin-left: 1px; font-size: 13px; padding-bottom: 2px; }
.btn-more { width: 73px; height: 17px; margin-left: 6px; display: inline-flex; align-items: center; justify-content: center; color: #333; font-size: 9.5px; }
.caret-dn { display: inline-block; border: 3px solid transparent; border-top: 4px solid #888; border-bottom: 0; margin-left: 2px; }
.ic-cross { width: 9px; height: 9px; margin-left: 665px; }
.tb-del { font-size: 13px; margin-left: 3px; padding-bottom: 2px; }

/* white sheets */
.sheet { margin-left: 6px; background: #fff; border-radius: 3px 0 0 3px; }
.sheet-list { margin-top: 3px; height: 437px; display: grid; grid-template-columns: 506px 1126px; }
.sheet-detail { margin-top: 4px; width: 1632px; height: 971px; padding: 12px 12px 0; }

/* sidebar */
.side { padding: 15px 0 0 19px; }
.side-list li { height: 20px; line-height: 20px; display: flex; align-items: center; font-size: 13px; white-space: nowrap; }
.dot { width: 7px; height: 8px; border: 1px solid #aaa; background: #f4f4f4; margin-right: 9px; margin-top: 3px; flex: none; }
.current { background: #e4e0da; color: #333; padding: 0 1px; margin-left: -1px; }
.side-head { margin: 19px 0 -1px -3px; line-height: 10px; font-size: 9.5px; color: #333; font-weight: 700; }
.ic-check { width: 10px; height: 10px; margin: 2px 0 0 5px; color: #6cc03c; }
.side-notify { margin: 17px 0 0 -3px; height: 20px; line-height: 20px; display: flex; align-items: center; font-size: 11px; }
.ic-check2 { width: 11px; height: 11px; color: #2aa32a; margin-right: 3px; }

/* main column */
.top-title { height: 43px; padding-top: 12px; line-height: 22px; font-size: 15px; font-weight: 500; color: #222; border-bottom: 2px solid #e5e5e5; display: flex; align-items: center; padding-bottom: 8px; }
.ic-board { width: 13px; height: 11px; margin-right: 1px; }
.ic-row { margin-right: 9px; width: 13px; height: 12px; }
.ic-paper { width: 5px; height: 11px; margin-right: 2px; }
.excerpt { margin-top: 5px; line-height: 20px; font-size: 13px; letter-spacing: .2px; }
.more { display: block; line-height: 20px; font-weight: 700; font-size: 13px; }
.list-head { margin-top: 21px; padding-bottom: 1px; height: 18px; line-height: 17px; font-size: 12px; font-weight: 500; color: #222; }
.list { margin-top: 3px; width: 1126px; border-collapse: separate; border-spacing: 0; table-layout: fixed; }
.list th { height: 17px; background: #00aede; color: #fff; text-align: left; font-size: 10px; font-weight: 700; padding: 0 0 1px; }
.c1 { width: 566px; padding-left: 4px !important; } .c2 { width: 226px; } .c3 { width: 224px; }
.list td { height: 27px; background: #f7f7f7; border-bottom: 2px solid #fff; padding: 0 0 2px; white-space: nowrap; font-size: 13px; }
.list tbody tr:first-child td { height: 30px; border-top: 3px solid #fff; }
.list td:first-child { padding-left: 2px; }
.list td:first-child svg { vertical-align: middle; }
.list .ic-row { margin-right: 11px; }
.list td.date { letter-spacing: .65px; }
.ic-u { width: 12px; height: 14px; margin-right: 2px; vertical-align: -2px; }
.u-green { color: #5fdc9a; }
.u-blue { color: #0aabd2; }
.pager { margin-top: 5px; line-height: 20px; font-size: 12px; color: #b0b0b0; padding-left: 2px; letter-spacing: .4px; word-spacing: 3px; }
.pager i { display: inline-block; width: 1px; height: 12px; background: #ccc; margin: 0 7px; vertical-align: -1px; }
.panels { margin-top: 6px; display: grid; grid-template-columns: 558px 559px; column-gap: 8px; row-gap: 7px; padding-left: 1px; }
.panel-head { height: 16px; line-height: 16px; background: #00aede; font-size: 9.5px; font-weight: 400; color: #0a5d90; margin-bottom: 1.5px; display: flex; align-items: center; }
.ic-pcheck { width: 9px; height: 9px; color: #8fd43a; margin-left: 4px; }
.panel-row { height: 20px; margin-bottom: 1.5px; background: #f7f7f7; display: flex; align-items: center; font-size: 12px; white-space: nowrap; padding-left: 2px; }
.p-date { font-size: 11px; margin-left: 5px; letter-spacing: .3px; }
.hover { text-decoration: underline; color: #0a9ae0; }

/* back link + footer */
.back { margin-top: 9px; height: 18px; line-height: 18px; padding-left: 9px; display: flex; align-items: center; font-size: 13px; }
.left { border: 4px solid transparent; border-right: 5px solid #888; border-left: 0; margin-right: 7px; }
.foot { background: #5d8194; color: #eef; font-size: 11.5px; height: 17px; line-height: 17px; text-align: center; }
.foot-a { margin-top: 6px; padding-left: 10px; }
.foot-b { margin-top: 4px; padding-right: 2px; }
.win-b .left { margin-right: 6px; }

/* post detail */
.title-bar { height: 27px; background: #00aede; display: flex; align-items: center; padding-left: 12px; color: #fff; }
.ic-title { margin-right: 1px; }
.post-title { font-size: 14.5px; font-weight: 700; white-space: nowrap; }
.post-cat { font-size: 10.5px; margin-left: 4px; }
.title-tools { margin-left: auto; display: flex; align-items: center; padding-right: 13px; }
.ic-link { width: 12px; height: 7px; margin-right: 1px; }
.fixed-link { font-size: 10.5px; color: #eaf6ff; }
.btn-top { width: 72px; height: 19px; margin: 0 38px 0 28px; display: inline-flex; align-items: center; justify-content: center; font-size: 9.5px; color: #2a6f96; }
.ic-star { width: 12px; height: 12px; margin-right: 1px; }
.prevnext { font-size: 11px; color: #fff; letter-spacing: .6px; }
.info { height: 60px; background: #e9f6fd; padding: 1px 0 0 11px; }
.info-row { height: 20px; display: flex; align-items: center; font-size: 10.5px; white-space: nowrap; }
.info-row dt { width: 57px; }
.info-row dd:nth-of-type(1) { width: 12px; }
.info-val { font-size: 11px; letter-spacing: .2px; }
.info-row b { color: #333; }
.post-body { margin-top: 8px; padding-left: 4px; white-space: pre-line; font-size: 13px; line-height: 15.4px; }
.mono { font-family: "Liberation Mono", monospace; font-size: 12px; line-height: 0; margin-left: 3px; }
.like-row { display: flex; align-items: center; height: 16px; font-size: 11.5px; }
.like-main { margin: 9px 0 0 3px; }
.ic-like { width: 13px; height: 13px; margin-right: 1px; }
.like-link { color: #55b9ea; }
.caret-like { margin-left: 8px; border-width: 3px; border-top-width: 4px; }
.ic-reply { width: 13px; height: 13px; margin: 0 1px 0 16px; }
.like-box { position: relative; margin: 7px 0 0 3px; width: 63px; height: 29px; background: #f0f0f0; display: flex; align-items: center; padding-left: 9px; font-size: 11px; color: #55b9ea; }
.like-box::before { content: ""; position: absolute; left: 25px; top: -4px; border: 4px solid transparent; border-top: 0; border-bottom: 4px solid #f0f0f0; }
.ic-lk { width: 14px; height: 16px; margin-right: 16px; }
.compose { margin-top: 15px; border-top: 2px solid #eee; border-bottom: 2px solid #eee; padding: 4px 0 5px; margin-bottom: 0; }
.compose-head { line-height: 16px; font-size: 12.5px; font-weight: 500; color: #222; padding-left: 4px; }
.compose-row { margin-top: 5px; height: 16px; display: flex; align-items: center; padding-left: 5px; font-size: 13px; white-space: nowrap; }
.compose-row .ic-u { margin-right: 2px; }
.compose-name { margin: 0 4px 0 1px; }
.dept { width: 169px; height: 15px; font: 10px "Noto Sans CJK JP", sans-serif; color: #777; padding: 0; border: 1px solid #777; background: #fff; }
.rad { display: inline-flex; align-items: center; font-size: 12px; }
.rad input { margin: 0 3px 0 0; width: 11px; height: 11px; }
.rad-first { margin: 0 5px 0 5px; }
.rad em { color: #e0282c; font-style: italic; text-decoration: underline; }
.editor-wrap { margin: 6px 0 0 3px; display: flex; align-items: flex-start; }
.editor { width: 404px; height: 122px; border: 1px solid #ccc; }
.ed-tools { height: 23px; background: #f5f5f5; border-bottom: 1px solid #ccc; padding: 2px; }
.ed-btn { width: 61px; height: 18px; border: 1px solid #ddd; background: #f8f8f8; font: 9.5px "Noto Sans CJK JP", sans-serif; color: #666; padding: 0; }
.ed-text { display: block; width: 100%; height: 97px; border: 0; padding: 0; background: #fff; }
.ed-expand { width: 12px; height: 12px; margin: 4px 0 0 1px; border: 1px solid #ccc; border-radius: 2px; background: #eef; display: flex; align-items: center; justify-content: center; }
.ic-expand { width: 9px; height: 9px; }
.file-row { margin: 3px 0 0 4px; display: flex; align-items: center; height: 18px; white-space: nowrap; }
.btn-file { width: 83px; height: 18px; font-size: 9px; }
.file-hint { font-size: 11.7px; color: #aaa; margin-left: 6px; }
.btn-write { display: block; margin: 8px 0 0 3px; width: 56px; height: 25px; font-size: 11.5px; }
.comment { display: flex; padding: 3.5px 0 10.9px 7px; border-bottom: 2px solid #eee; }
.comment-last { border-bottom: 0; }
.avatar { width: 19px; height: 22px; margin: 5px 10px 0 0; }
.c-main { flex: 1; }
.c-head { line-height: 18px; font-size: 12px; white-space: nowrap; }
.c-date { margin-left: 3px; letter-spacing: .7px; }
.c-body { margin-top: 5.8px; white-space: pre-line; font-size: 13px; line-height: 15.4px; }
.c-main .like-row { margin-top: 8px; }
```
